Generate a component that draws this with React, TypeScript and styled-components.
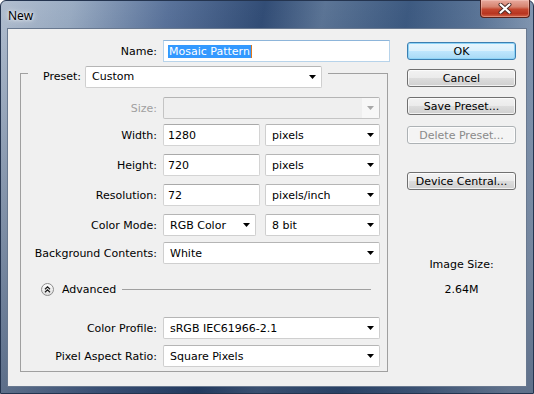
import React from "react";
import styled, { createGlobalStyle } from "styled-components";

const GlobalStyle = createGlobalStyle`
  html, body {
    margin: 0;
    padding: 0;
    background: #ffffff;
  }
  body {
    font-family: Tahoma, "DejaVu Sans", sans-serif;
    font-size: 11px;
    color: #000;
  }
`;

const LINE = "#a0a0a0";

const Window = styled.div`
  width: 534px;
  height: 394px;
  box-sizing: border-box;
  display: flex;
  flex-direction: column;
  padding: 0 6px 6px;
  border: 1px solid #24344f;
  border-radius: 6px 6px 0 0;
  background:
    linear-gradient(to bottom, rgba(255, 255, 255, 0) 0%, rgba(16, 34, 66, 0.45) 100%),
    linear-gradient(100deg, #b2bfd0 0%, #9aacc3 12%, #5a739b 28%, #324d76 44%, #5c7596 54%, #3d5a81 68%, #5c7698 80%, #a0b1c6 96%);
`;

const TitleBar = styled.div`
  height: 27px;
  margin: 0 -6px;
  padding: 0 3px 0 7px;
  display: flex;
  justify-content: space-between;
  align-items: flex-start;
`;

const Title = styled.span`
  margin-top: 6px;
  font-family: "Noto Sans", "DejaVu Sans", sans-serif;
  font-size: 12px;
  color: #000;
  text-shadow: 0 0 6px rgba(255, 255, 255, 0.95), 0 0 3px rgba(255, 255, 255, 0.9);
`;

const CloseButton = styled.div`
  width: 50px;
  height: 18px;
  box-sizing: border-box;
  margin-top: -1px;
  border: 1px solid #5a2119;
  border-top: none;
  border-radius: 0 0 4px 4px;
  background: linear-gradient(to bottom, #e8aa9e 0%, #d6836f 40%, #c4462e 55%, #b83520 80%, #d2654a 100%);
  box-shadow: inset 0 0 0 1px rgba(255, 220, 210, 0.35);
  display: flex;
  align-items: center;
  justify-content: center;
`;

const Client = styled.div`
  flex: 1;
  display: flex;
  gap: 17px;
  padding: 11px 0 0 12px;
  background: #f0f0f0;
  border: 1px solid #68788f;
`;

const FormColumn = styled.div`
  width: 370px;
  display: flex;
  flex-direction: column;
`;

const ButtonColumn = styled.div`
  width: 109px;
  padding-top: 2px;
  display: flex;
  flex-direction: column;
`;

const Row = styled.div<{ $mt?: number }>`
  display: flex;
  align-items: center;
  gap: 6px;
  margin-top: ${({ $mt }) => $mt ?? 0}px;
`;

const Label = styled.span<{ $width?: number; $disabled?: boolean }>`
  width: ${({ $width }) => $width ?? 136}px;
  text-align: right;
  white-space: nowrap;
  color: ${({ $disabled }) => ($disabled ? "#a0a0a0" : "#000")};
`;

const NameInput = styled.div`
  width: 227px;
  height: 22px;
  box-sizing: border-box;
  border: 1px solid #b7d3ea;
  border-top-color: #8db5da;
  background: #fff;
  display: flex;
  align-items: center;
  padding-left: 4px;
`;

const Selection = styled.span`
  background: #3399ff;
  color: #fff;
  line-height: 13px;
  padding: 0 1px;
`;

const Caret = styled.span`
  width: 1px;
  height: 13px;
  background: #e07a1f;
`;

const TextField = styled.div<{ $width: number }>`
  width: ${({ $width }) => $width}px;
  height: 22px;
  box-sizing: border-box;
  border: 1px solid #d4d4d4;
  border-top-color: #a9a9a9;
  border-radius: 2px;
  background: #fff;
  display: flex;
  align-items: center;
  padding-left: 4px;
`;

const Select = styled.div<{ $width: number; $disabled?: boolean }>`
  width: ${({ $width }) => $width}px;
  height: 22px;
  box-sizing: border-box;
  border: 1px solid ${({ $disabled }) => ($disabled ? "#c4c4c4" : "#cfcfcf")};
  border-top-color: ${({ $disabled }) => ($disabled ? "#b4b4b4" : "#b5b5b5")};
  border-radius: 2px;
  background: ${({ $disabled }) => ($disabled ? "#efefef" : "#fff")};
  display: flex;
  align-items: center;
  justify-content: space-between;
  padding: 0 5px 0 6px;
`;

const SelectValue = styled.span`
  white-space: nowrap;
`;

const ArrowBox = styled.span<{ $disabled?: boolean }>`
  display: flex;
  align-items: center;
  justify-content: center;
  height: 100%;
  ${({ $disabled }) =>
    $disabled ? "background: #f7f7f7; width: 17px; margin-right: -5px;" : ""}
`;

const Pair = styled.div`
  width: 217px;
  display: flex;
  justify-content: space-between;
`;

const Group = styled.div`
  width: 368px;
  margin-top: 4px;
  display: flex;
  flex-direction: column;
`;

const GroupHeader = styled.div`
  display: flex;
  height: 21px;
`;

const HeaderCap = styled.div`
  width: 7px;
  margin-top: 7px;
  border-top: 1px solid ${LINE};
  border-left: 1px solid ${LINE};
`;

const Legend = styled.div`
  display: flex;
  align-items: center;
  gap: 4px;
  padding-right: 6px;
`;

const HeaderRest = styled.div`
  flex: 1;
  margin-top: 7px;
  border-top: 1px solid ${LINE};
  border-right: 1px solid ${LINE};
`;

const GroupBody = styled.div`
  border: 1px solid ${LINE};
  border-top: none;
  padding-bottom: 4px;
  display: flex;
  flex-direction: column;
`;

const AdvancedRow = styled.div`
  display: flex;
  align-items: center;
  height: 16px;
  margin: 17px 16px 0 20px;
`;

const AdvancedText = styled.span`
  margin: 0 6px 0 8px;
`;

const Rule = styled.div`
  flex: 1;
  border-top: 1px solid ${LINE};
`;

const Button = styled.div<{ $mt?: number; $default?: boolean; $disabled?: boolean }>`
  height: 18px;
  box-sizing: border-box;
  margin-top: ${({ $mt }) => $mt ?? 0}px;
  border: 1px solid ${({ $default, $disabled }) => ($default ? "#3c7fb1" : $disabled ? "#adb2b5" : "#707070")};
  border-radius: 3px;
  display: flex;
  align-items: center;
  justify-content: center;
  color: ${({ $disabled }) => ($disabled ? "#8a8a8a" : "#000")};
  background: ${({ $default, $disabled }) =>
    $disabled
      ? "#f4f4f4"
      : $default
      ? "linear-gradient(to bottom, #eaf6fd 0%, #d9f0fc 50%, #bee6fd 51%, #a7d9f5 100%)"
      : "linear-gradient(to bottom, #f2f2f2 0%, #ebebeb 50%, #dddddd 51%, #cfcfcf 100%)"};
  box-shadow: ${({ $default }) => ($default ? "inset 0 0 0 1px #8ed4f7" : "inset 0 0 0 1px rgba(255,255,255,0.7)")};
`;

const ImageSize = styled.div`
  margin-top: 68px;
  display: flex;
  flex-direction: column;
  align-items: center;
  gap: 12px;
  line-height: 13px;
`;

const Arrow = ({ disabled }: { disabled?: boolean }) => (
  <ArrowBox $disabled={disabled}>
    <svg width="7" height="4" viewBox="0 0 7 4">
      <polygon points="0,0 7,0 3.5,4" fill={disabled ? "#a8a8a8" : "#000"} />
    </svg>
  </ArrowBox>
);

const Dropdown = ({ width, value, disabled }: { width: number; value?: string; disabled?: boolean }) => (
  <Select $width={width} $disabled={disabled}>
    <SelectValue>{value}</SelectValue>
    <Arrow disabled={disabled} />
  </Select>
);

const CloseGlyph = () => (
  <svg width="14" height="11" viewBox="0 0 14 11">
    <path d="M2.5 1.5 L11.5 9.5 M11.5 1.5 L2.5 9.5" stroke="#4a2a26" strokeWidth="4" strokeLinecap="round" />
    <path d="M2.5 1.5 L11.5 9.5 M11.5 1.5 L2.5 9.5" stroke="#ffffff" strokeWidth="2.2" strokeLinecap="round" />
  </svg>
);

const CollapseIcon = () => (
  <svg width="13" height="13" viewBox="0 0 13 13">
    <defs>
      <linearGradient id="adv" x1="0" y1="0" x2="0" y2="1">
        <stop offset="0" stopColor="#ffffff" />
        <stop offset="1" stopColor="#dcdcdc" />
      </linearGradient>
    </defs>
    <circle cx="6.5" cy="6.5" r="6" fill="url(#adv)" stroke="#8c8c8c" />
    <path d="M4 6.2 L6.5 3.8 L9 6.2 M4 9.2 L6.5 6.8 L9 9.2" fill="none" stroke="#1a1a1a" strokeWidth="1.2" />
  </svg>
);

const App = () => {
  return (
    <>
      <GlobalStyle />
      <Window>
        <TitleBar>
          <Title>New</Title>
          <CloseButton>
            <CloseGlyph />
          </CloseButton>
        </TitleBar>
        <Client>
          <FormColumn>
            <Row>
              <Label $width={137}>Name:</Label>
              <NameInput>
                <Selection>Mosaic Pattern</Selection>
                <Caret />
              </NameInput>
            </Row>
            <Group>
              <GroupHeader>
                <HeaderCap />
                <Legend>
                  <Label $width={53}>Preset:</Label>
                  <Dropdown width={237} value="Custom" />
                </Legend>
                <HeaderRest />
              </GroupHeader>
              <GroupBody>
                <Row $mt={10}>
                  <Label $disabled>Size:</Label>
                  <Dropdown width={217} disabled />
                </Row>
                <Row $mt={5}>
                  <Label>Width:</Label>
                  <Pair>
                    <TextField $width={97}>1280</TextField>
                    <Dropdown width={115} value="pixels" />
                  </Pair>
                </Row>
                <Row $mt={8}>
                  <Label>Height:</Label>
                  <Pair>
                    <TextField $width={97}>720</TextField>
                    <Dropdown width={115} value="pixels" />
                  </Pair>
                </Row>
                <Row $mt={8}>
                  <Label>Resolution:</Label>
                  <Pair>
                    <TextField $width={97}>72</TextField>
                    <Dropdown width={115} value="pixels/inch" />
                  </Pair>
                </Row>
                <Row $mt={8}>
                  <Label>Color Mode:</Label>
                  <Pair>
                    <Dropdown width={93} value="RGB Color" />
                    <Dropdown width={115} value="8 bit" />
                  </Pair>
                </Row>
                <Row $mt={6}>
                  <Label>Background Contents:</Label>
                  <Dropdown width={217} value="White" />
                </Row>
                <AdvancedRow>
                  <CollapseIcon />
                  <AdvancedText>Advanced</AdvancedText>
                  <Rule />
                </AdvancedRow>
                <Row $mt={20}>
                  <Label>Color Profile:</Label>
                  <Dropdown width={217} value="sRGB IEC61966-2.1" />
                </Row>
                <Row $mt={6}>
                  <Label>Pixel Aspect Ratio:</Label>
                  <Dropdown width={217} value="Square Pixels" />
                </Row>
              </GroupBody>
            </Group>
          </FormColumn>
          <ButtonColumn>
            <Button $default>OK</Button>
            <Button $mt={9}>Cancel</Button>
            <Button $mt={10}>Save Preset...</Button>
            <Button $mt={11} $disabled>
              Delete Preset...
            </Button>
            <Button $mt={28}>Device Central...</Button>
            <ImageSize>
              <span>Image Size:</span>
              <span>2.64M</span>
            </ImageSize>
          </ButtonColumn>
        </Client>
      </Window>
    </>
  );
};

export default App;
